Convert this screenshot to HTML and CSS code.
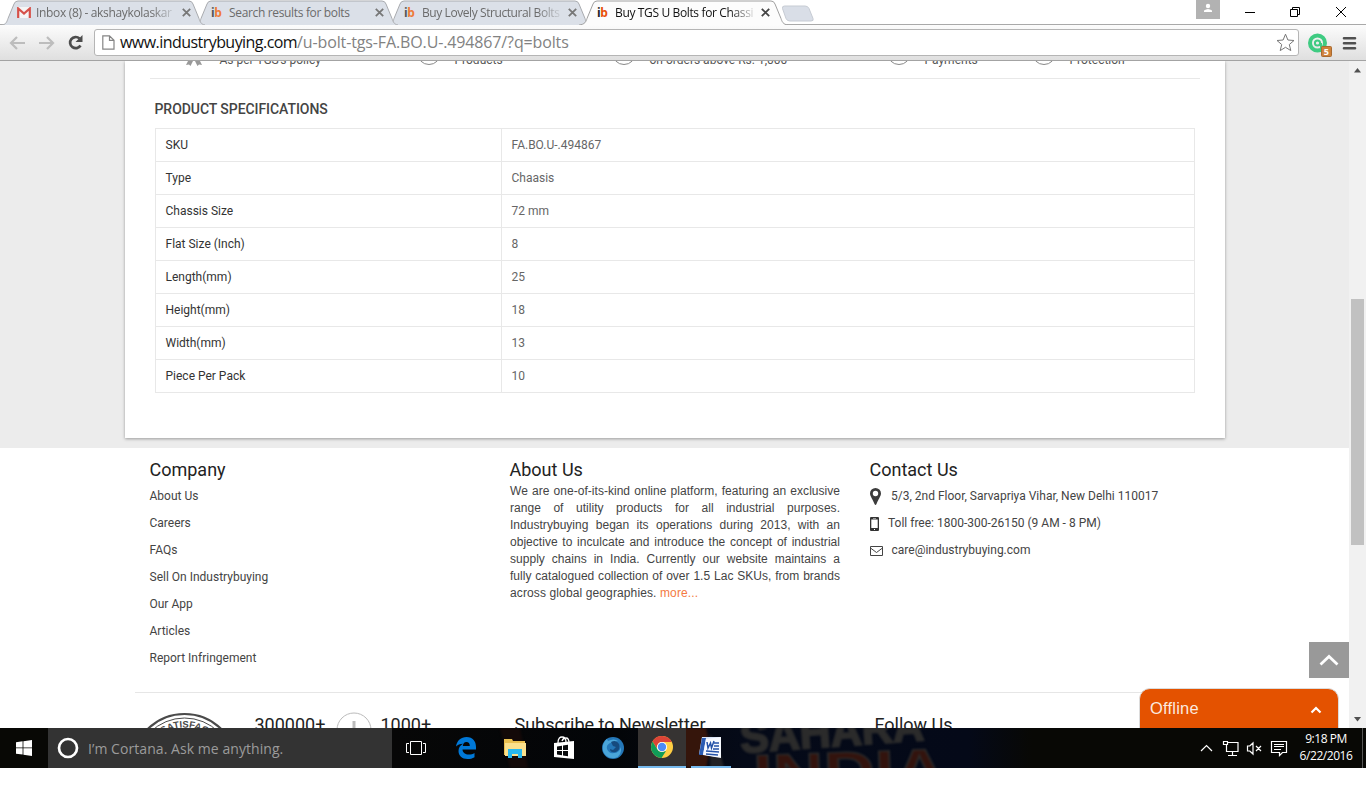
FILE: index.html
```html
<!DOCTYPE html>
<html lang="en">
<head>
<meta charset="utf-8">
<title>Buy TGS U Bolts for Chassis</title>
<link rel="stylesheet" href="styles.css">
</head>
<body>
<div class="tabstrip">
  <svg class="tab-shapes" width="830" height="24" viewBox="0 0 830 24">
    <g fill="#dbe0e8" stroke="#a9abaf">
      <path id="tab" d="M388 24.500C392 24 393 21 394 18L400 3.500Q401 .500 404 .500H575Q578 .500 579 3.500L585 18C586 21 587 24 591 24.500"/>
      <use href="#tab" x="-193"/>
      <use href="#tab" x="-386"/>
    </g>
    <path fill="#fcfcfc" stroke="#a0a0a0" d="M579 24.500C585 24 586 21 587 18L593 3.500Q594 .500 597 .500H771Q774 .500 775 3.500L781 18C782 21 783 24 788 24.500"/>
    <path fill="#d9dee7" stroke="#c6cbd3" d="M784.500 5.500H805Q808 5.500 809 8L813 18Q814 20.500 811 20.500H790Q787 20.500 786 18L782.500 8Q782 5.500 784.500 5.500Z"/>
  </svg>
  <div class="tab">
    <svg class="favicon" width="14" height="11" viewBox="0 0 14 11"><path fill="#f5f5f5" d="M1 0h12v11H1z"/><path fill="none" stroke="#d6514a" stroke-width="2.200" d="M1.200 11V1.500L7 6.500l5.800-5V11"/></svg>
    <span class="tab-title t1">Inbox (8) - akshaykolaskar</span>
    <svg class="close" width="9" height="9" viewBox="0 0 9 9"><path d="M.8.800l7.400 7.400M8.200.800L.8 8.200"/></svg>
  </div>
  <div class="tab">
    <span class="ib"><i>i</i>b</span>
    <span class="tab-title t2">Search results for bolts</span>
    <svg class="close" width="9" height="9" viewBox="0 0 9 9"><path d="M.8.800l7.400 7.400M8.200.800L.8 8.200"/></svg>
  </div>
  <div class="tab">
    <span class="ib"><i>i</i>b</span>
    <span class="tab-title t3">Buy Lovely Structural Bolts</span>
    <svg class="close" width="9" height="9" viewBox="0 0 9 9"><path d="M.8.800l7.400 7.400M8.200.800L.8 8.200"/></svg>
  </div>
  <div class="tab active">
    <span class="ib"><i>i</i>b</span>
    <span class="tab-title t4">Buy TGS U Bolts for Chassi</span>
    <svg class="close" width="9" height="9" viewBox="0 0 9 9"><path d="M.8.800l7.400 7.400M8.200.800L.8 8.200"/></svg>
  </div>
  <svg class="window-controls" width="170" height="24" viewBox="0 0 170 24">
    <path fill="#b2b2b2" d="M0 0h24v19H0z"/><circle cx="12" cy="6" r="2.200" fill="#fff"/><path fill="#fff" d="M8 12V10.500Q12 7.500 16 10.500V12z"/>
    <g fill="none" stroke="#000"><path d="M49 12.500h10M94.500 9.500h7v7h-7zM96.500 9.500v-2h7v7h-2M140 7l10 10M150 7l-10 10"/></g>
  </svg>
</div>
<div class="toolbar">
  <svg class="nav-icons" width="94" height="36" viewBox="0 0 94 36">
    <path fill="none" stroke="#bdbdbd" stroke-width="2.200" d="M25 18H11.500M17 12l-6 6 6 6M39 18h13.500M47 12l6 6-6 6"/>
    <path fill="none" stroke="#4d4d4d" stroke-width="2.700" d="M79.500 13.500A5.600 5.600 0 1 0 80.500 20.500"/><path fill="#4d4d4d" d="M82.500 10v7h-7z"/>
  </svg>
  <div class="omnibox">
    <svg width="13" height="15" viewBox="0 0 13 15"><path fill="#fff" stroke="#858585" stroke-width="1.200" d="M.8.800H7.500L12 5.300V14.200H.8zM7.500.800V5.300H12"/></svg>
    <span class="url"><span class="host">www.industrybuying.com</span><span class="path">/u-bolt-tgs-FA.BO.U-.494867/?q=bolts</span></span>
    <svg class="star" width="19" height="19" viewBox="0 0 19 19"><path fill="none" stroke="#777" d="M9.500 1.200l2.400 5.800 6.100.5-4.700 4 1.500 6.100-5.300-3.300-5.300 3.300 1.500-6.100-4.700-4 6.100-.5z"/></svg>
  </div>
  <svg class="ext" width="62" height="36" viewBox="0 0 62 36">
    <circle cx="14.500" cy="18" r="7.500" fill="none" stroke="#3fcb82" stroke-width="4"/><circle cx="14.500" cy="18" r="2.600" fill="none" stroke="#3fcb82" stroke-width="2"/>
    <path stroke="#3fcb82" stroke-width="2" d="M18 18v6"/>
    <rect x="18.500" y="21.500" width="10" height="10" rx="1" fill="#cf8139" stroke="#a86a30"/><text x="20.800" y="30" class="badge-num">5</text>
    <path stroke="#505050" stroke-width="2.600" stroke-linecap="round" d="M41 13.300h11M41 18.300h11M41 23.300h11"/>
  </svg>
</div>
<div class="viewport">
  <div class="page">
    <div class="upper">
      <div class="card">
        <div class="features">
          <svg width="18" height="24" viewBox="0 0 18 24"><circle cx="9" cy="12" r="7" fill="#999"/><path fill="#999" d="M4 17l-3 6 3-.5 1.500 1.500L8 19zM14 17l3 6-3-.5-1.500 1.500L10 19z"/></svg><span>As per TGS's policy</span>
          <b class="ring"></b><span>Products</span>
          <b class="ring"></b><span>on orders above Rs. 1,000</span>
          <b class="ring"></b><span>Payments</span>
          <b class="ring"></b><span>Protection</span>
        </div>
        <h2>PRODUCT SPECIFICATIONS</h2>
        <table class="specs">
          <tr><th>SKU</th><td>FA.BO.U-.494867</td></tr>
          <tr><th>Type</th><td>Chaasis</td></tr>
          <tr><th>Chassis Size</th><td>72 mm</td></tr>
          <tr><th>Flat Size (Inch)</th><td>8</td></tr>
          <tr><th>Length(mm)</th><td>25</td></tr>
          <tr><th>Height(mm)</th><td>18</td></tr>
          <tr><th>Width(mm)</th><td>13</td></tr>
          <tr><th>Piece Per Pack</th><td>10</td></tr>
        </table>
      </div>
    </div>
    <div class="footer">
      <div class="col">
        <h3>Company</h3>
        <ul>
          <li>About Us</li><li>Careers</li><li>FAQs</li><li>Sell On Industrybuying</li><li>Our App</li><li>Articles</li><li>Report Infringement</li>
        </ul>
      </div>
      <div class="col">
        <h3>About Us</h3>
        <p class="about">We are one-of-its-kind online platform, featuring an exclusive<br>range of utility products for all industrial purposes.<br>Industrybuying began its operations during 2013, with an<br>objective to inculcate and introduce the concept of industrial<br>supply chains in India. Currently our website maintains a<br>fully catalogued collection of over 1.5 Lac SKUs, from brands</p>
        <p class="about last">across global geographies. <a>more...</a></p>
      </div>
      <div class="col">
        <h3>Contact Us</h3>
        <ul class="contact">
          <li><svg width="11" height="17" viewBox="0 0 11 17"><path fill="#3c3c3c" fill-rule="evenodd" d="M5.500 0A5.500 5.500 0 0 1 11 5.500C11 8 8 12 6.500 16Q5.500 18 4.500 16C3 12 0 8 0 5.500A5.500 5.500 0 0 1 5.500 0zm0 2.800a2.700 2.700 0 1 0 0 5.400 2.700 2.700 0 0 0 0-5.400z"/></svg><span>5/3, 2nd Floor, Sarvapriya Vihar, New Delhi 110017</span></li>
          <li class="phone"><svg width="9" height="14" viewBox="0 0 9 14"><path fill="#333" fill-rule="evenodd" d="M1 0h7q1 0 1 1v12q0 1-1 1H1q-1 0-1-1V1q0-1 1-1zm.3 2.500v8.500h6.400V2.500zM3 1v.6h3V1zM4 12v1h1v-1z"/></svg><span>Toll free: 1800-300-26150 (9 AM - 8 PM)</span></li>
          <li class="mail"><svg width="13" height="10" viewBox="0 0 13 10"><path fill="none" stroke="#444" d="M.5.500h12v9H.5zM.5 2l6 4.500 6-4.500"/></svg><span>care@industrybuying.com</span></li>
        </ul>
      </div>
    </div>
    <div class="bottom">
      <svg class="seal" width="80" height="36" viewBox="0 0 80 36">
        <g fill="none" stroke="#4a4a4a"><circle cx="39.500" cy="54.500" r="52.500" stroke-width="2.200"/><circle cx="39.500" cy="54.500" r="48.500"/></g>
        <path id="arc" fill="none" d="M.5 54.500a39 39 0 0 1 78 0"/><text class="seal-text"><textPath href="#arc" startOffset="38">SATISFACTION</textPath></text>
      </svg>
      <span class="count">300000+</span>
      <svg class="dial" width="36" height="36" viewBox="0 0 36 36"><circle cx="18" cy="18" r="17" fill="none" stroke="#bbb"/><path stroke="#bbb" stroke-width="3" d="M18 9v18"/></svg>
      <span class="count">1000+</span>
      <span class="news">Subscribe to Newsletter</span>
      <span class="follow">Follow Us</span>
    </div>
    <svg class="to-top" width="40" height="36" viewBox="0 0 40 36"><path fill="#999" d="M0 0h40v36H0z"/><path fill="none" stroke="#fff" stroke-width="2.800" d="M11.500 22.500L20 14.500l8.500 8"/></svg>
    <div class="chat"><span>Offline</span><svg width="12" height="8" viewBox="0 0 12 8"><path fill="none" stroke="#fff" stroke-width="2.200" d="M1.500 6.500L6 2l4.500 4.500"/></svg></div>
  </div>
  <div class="scrollbar">
    <svg width="17" height="18" viewBox="0 0 17 18"><path fill="#505050" d="M5 11.500L8.500 7l3.500 4.500z"/></svg>
    <i class="thumb"></i>
    <svg width="17" height="17" viewBox="0 0 17 17"><path fill="#505050" d="M5 6l3.500 4.500L12 6z"/></svg>
  </div>
</div>
<div class="taskbar">
  <svg class="wallpaper" width="640" height="40" viewBox="0 0 640 40">
    <defs><linearGradient id="navy"><stop offset="0" stop-color="#070707"/><stop offset=".35" stop-color="#030508"/><stop offset=".55" stop-color="#050a18"/><stop offset=".9" stop-color="#040918"/><stop offset="1" stop-color="#080805"/></linearGradient></defs>
    <path fill="url(#navy)" d="M0 0h640v40H0z"/>
    <g class="jersey"><path fill="#130908" d="M108 0h20l8 40h-18z"/><path fill="#35150b" d="M288 0h26q6 20 0 40h-20z"/><path fill="#222226" d="M318 6q10 12 14 34h-14z"/>
    <text x="349" y="25" class="shirt-top" textLength="184" lengthAdjust="spacingAndGlyphs" transform="rotate(-4 349 25)">SAHARA</text>
    <text x="362" y="66" class="shirt-low" textLength="192" lengthAdjust="spacingAndGlyphs" transform="rotate(-2 362 66)">INDIA</text></g>
  </svg>
  <div class="start"><svg width="16" height="16" viewBox="0 0 16 16"><path fill="#fff" d="M0 2.200l6.600-.9v6.200H0zM7.400 1.200L16 0v7.500H7.400zM0 8.300h6.600v6.300L0 13.700zM7.400 8.300H16V16l-8.600-1.200z"/></svg></div>
  <div class="cortana"><svg width="22" height="22" viewBox="0 0 22 22"><circle cx="11" cy="11" r="9" fill="none" stroke="#fff" stroke-width="2.700"/></svg><span>I’m Cortana. Ask me anything.</span></div>
  <div class="apps">
    <div class="app"><svg width="20" height="14" viewBox="0 0 20 14"><path fill="none" stroke="#fff" d="M4.500.500h11v13h-11zM3 2.500H.5v9H3M17 2.500h2.500v9H17"/></svg></div>
    <div class="app edge"><svg width="20" height="22" viewBox="0 0 20 22"><path fill="#0078d7" d="M0 9.500C1 3.500 5 0 10.500 0 17 0 20 4.500 20 10v2.500H6.500c.2 3.500 3 5 6 5 2.500 0 4.500-.6 6-1.600v4.300C16.500 21.500 14 22 11.500 22 6 22 2.500 18.700 2.500 14c0-3 1.500-5.700 4.500-7.300-3 .2-5.600 1.200-7 2.800zM6.800 9h7c0-2.500-1.200-4-3.400-4S7.200 6.500 6.800 9z"/></svg></div>
    <div class="app edge"><svg width="22" height="19" viewBox="0 0 22 19"><path fill="#e9bf4f" d="M0 0h8l1 2h12v14H0z"/><path fill="#fae08c" d="M1 4h21v13H1z"/><path fill="#27b8ee" d="M4 10h14v9h-4v-4H8v4H4z"/></svg></div>
    <div class="app edge"><svg width="22" height="24" viewBox="0 0 22 24"><path fill="none" stroke="#fff" stroke-width="1.300" d="M5 7C5 2 7 1 9 1s4 1 4 5M9 5q1-3 4-3 3 0 3 5"/><path fill="#fff" d="M1 7l20-2v18L1 21z"/><path fill="#080a0c" d="M4 10.500l5-.8V14H4zM10 9.500l5-.8V14h-5zM4 15h5v4.300L4 18.500zM10 15h5v5.300l-5-.8z"/></svg></div>
    <div class="app edge"><svg width="22" height="22" viewBox="0 0 22 22"><circle cx="11" cy="11" r="11" fill="#2477b8"/><path fill="#4aa5d9" d="M1 8Q3 3 5 2l1 2q6-3 10 0l-4 1-4 1q-4 2-3 6 2 5 7 4 5 0 7-6 1 9-6 11-9 1-12-7z"/><path fill="#164a7e" d="M9 5q5-3 8 2 2 5-3 8-6 1-6-3l3 1 3-3-3-1z"/></svg></div>
    <div class="app open hot"><svg width="22" height="22" viewBox="0 0 22 22"><circle cx="11" cy="11" r="11" fill="#ffce43"/><path fill="#dc4437" d="M1.500 5.500A11 11 0 0 1 20.700 6H11a5 5 0 0 0-4.600 7z"/><path fill="#109c58" d="M1.500 5.500l5 8Q8 16 11 16l4-1-4.500 7A11 11 0 0 1 1.500 5.500z"/><circle cx="11" cy="11" r="5.100" fill="#fff"/><circle cx="11" cy="11" r="4.200" fill="#4c8bf5"/></svg></div>
    <div class="app open word"><svg width="23" height="23" viewBox="0 0 23 23"><path fill="#d9e4f7" d="M3 1h19v16l-4 4L0 18z"/><path fill="#2b5cb3" d="M3 2h4L4 19H0z"/><path fill="#f7faff" d="M7 3l15-2v21L4 19z"/><path fill="none" stroke="#2452a8" stroke-width="1.500" d="M8 6l1 6 2.500-5 1 5L15 5M15 7h5M15 10h5M14 13h6M7 15l13 1M7 18l12 1"/></svg></div>
  </div>
  <svg class="tray" width="90" height="40" viewBox="0 0 90 40">
    <g fill="none" stroke="#fff" stroke-width="1.200"><path d="M1 23l5.500-5.500L12 23"/><path d="M28 14.500h10v9H26.500V17M23.500 13.500h4v3h-4zM32.500 24v3M28 27.500h9"/><path d="M47.500 18h2.300l3.200-3v11l-3.200-3h-2.300zM56 18l5 5M61 18l-5 5"/><path d="M71.500 13.500h15v11h-4l-3 3v-3h-8zM74 16.500h10M74 18.500h10M74 21.500h7"/></g>
  </svg>
  <div class="clock"><span>9:18 PM</span><span class="date">6/22/2016</span></div>
  <i class="peek"></i>
</div>
</body>
</html>
```
FILE: styles.css
```css
* { box-sizing: border-box; }
body { margin: 0; background: #fff; font-family: Roboto, sans-serif; height: 802px; overflow: hidden; display: flex; flex-direction: column; }
svg { display: block; flex: none; }
i { font-style: normal; }

.tabstrip { position: relative; height: 25px; flex: none; display: flex; padding-left: 17px; font: 12px "Open Sans", sans-serif; border-bottom: 1px solid #a9a9a9; }
.tab-shapes { position: absolute; left: 0; top: 0; height: 25px; }
.tab { position: relative; width: 193px; height: 25px; display: flex; align-items: center; color: #6b6b6b; }
.favicon { margin-right: 5px; }
.ib { width: 19px; flex: none; font: bold 12px "Open Sans", sans-serif; letter-spacing: -.4px; color: #ee7a37; padding-left: 1px; }
.ib i { color: #555; }
.tab-title { width: 138px; flex: none; overflow: hidden; white-space: nowrap; mask-image: linear-gradient(90deg, #000 115px, transparent 142px); letter-spacing: -.42px; }
.t2 { mask-image: none; letter-spacing: -.34px; }
.t1 { letter-spacing: -.33px; }
.t4 { letter-spacing: -.36px; }
.close { margin-left: 8px; stroke: #777; stroke-width: 1.8; }
.active { color: #111; }
.active .ib { color: #e8500a; }
.active .ib i { color: #222; }
.active .close { stroke: #444; }
.tabstrip .window-controls { position: relative; width: 170px; margin-left: auto; }

.toolbar { height: 36px; flex: none; display: flex; align-items: center; background: linear-gradient(#fcfcfc, #dfdfdf); border-bottom: 1px solid #a3a3a3; }
.omnibox { width: 1205px; height: 27px; border: 1px solid #b5b5b5; border-radius: 3px; background: #fff; display: flex; align-items: center; padding: 0 3px 0 7px; margin-top: -1px; }
.url { margin-left: 5px; font: 16px "Open Sans", sans-serif; white-space: nowrap; }
.host { color: #111; letter-spacing: -.55px; }
.path { color: #828282; letter-spacing: -.13px; }
.star { margin-left: auto; }
.ext { margin-left: 4px; }
.badge-num { font: bold 9px "Open Sans", sans-serif; fill: #fff; }

.viewport { height: 667px; flex: none; display: flex; }
.page { position: relative; width: 1349px; height: 667px; overflow: hidden; }
.upper { height: 387px; background: #ececec; overflow: hidden; }
.card { width: 1100px; height: 377px; margin-left: 125px; background: #fff; box-shadow: 0 1px 3px rgba(0,0,0,.35); padding: 0 30px 0 25px; overflow: hidden; }
.features { width: 1050px; height: 33px; margin-top: -15px; padding-left: 35px; display: grid; grid-template-columns: 34px 199px 36px 159px 36px 239px 36px 109px 36px 1fr; align-items: start; border-bottom: 1px solid #e8e8e8; font-size: 12px; color: #555; line-height: 14px; white-space: nowrap; }
.features > svg { margin-top: -4px; }
.features span { margin-top: 7px; padding-left: .5px; }
.ring { width: 24px; height: 24px; border: 1px solid #888; border-radius: 50%; margin-top: -5px; margin-left: -1px; }
.card h2 { margin: 21px 0 10px 4.5px; font-size: 14px; line-height: 18px; font-weight: 500; color: #444; letter-spacing: -.06px; }
.specs { margin-left: 5px; width: 1040px; border-collapse: collapse; font-size: 12px; }
.specs th, .specs td { height: 33px; padding: 0 10px 0 9.5px; border: 1px solid #e8e8e8; text-align: left; font-weight: 400; line-height: 16px; }
.specs th { width: 346px; color: #333; }
.specs td { color: #666; }

.footer { height: 245px; margin-left: 135px; width: 1080px; border-bottom: 1px solid #e6e6e6; padding: 11px 0 0 14.5px; display: flex; }
.col { width: 360px; flex: none; color: #444; font-size: 12px; }
.col h3 { margin: 0; font-size: 18px; line-height: 22px; font-weight: 400; color: #222; }
.col ul { list-style: none; margin: 1px 0 0; padding: 0; }
.col li { height: 27px; line-height: 26px; display: flex; align-items: center; }
.contact svg { margin-top: 2px; }
.contact span { margin-left: 10.5px; }
.contact .phone span { margin-left: 9.5px; }
.contact .mail span { margin-left: 9px; }
.about { margin: 2px 0 0 .5px; width: 330px; font: 12px/17px "Liberation Sans", sans-serif; text-align: justify; text-align-last: justify; letter-spacing: .03px; }
.about.last { margin-top: 0; text-align-last: left; letter-spacing: .12px; }
.about a { color: #f47a42; }

.bottom { height: 36px; display: flex; padding-left: 145px; padding-top: 19px; font-size: 18px; line-height: 22px; color: #222; white-space: nowrap; }
.bottom span { margin-top: 2px; }
.seal-text { font: bold 9.5px "Liberation Sans", sans-serif; fill: #4a4a4a; }
.count { width: 81px; margin-left: 29.5px; }
.dial + .count { margin-left: 9px; width: 134px; }
.news { width: 360px; }
.to-top { position: absolute; right: 0; top: 581px; }
.chat { position: absolute; left: 1139px; top: 627px; width: 200px; height: 50px; border: 1px solid #dcdcdc; border-radius: 11px 11px 0 0; background: #e45200; color: #fbe9df; font: 16.5px "Liberation Sans", sans-serif; letter-spacing: .2px; display: flex; justify-content: space-between; padding: 10px 16px 0 10px; }
.chat svg { margin-top: 7px; }
.scrollbar { width: 17px; height: 667px; background: #f1f1f1; display: flex; flex-direction: column; position: relative; }
.thumb { width: 13px; height: 246px; background: #c1c1c1; margin: 220px 0 auto 2px; }

.taskbar { position: relative; height: 40px; flex: none; background: #080805; display: flex; overflow: hidden; }
.wallpaper { position: absolute; left: 392px; top: 0; }
.jersey { filter: blur(1px); font-family: "Liberation Sans", sans-serif; font-weight: bold; }
.shirt-top { font-size: 44px; fill: #2b2b2b; stroke: #2b2b2b; stroke-width: 2px; }
.shirt-low { font-size: 56px; fill: #33130d; stroke: #2c2c2c; stroke-width: 1.5px; }
.start { width: 48px; display: flex; align-items: center; justify-content: center; position: relative; }
.cortana { width: 344px; background: #333; display: flex; align-items: center; padding-left: 9px; color: #9b9b9b; font: 14px "Open Sans", sans-serif; letter-spacing: .06px; position: relative; }
.cortana span { margin-left: 9px; white-space: nowrap; }
.apps { display: flex; position: relative; }
.app { width: 49px; height: 40px; display: flex; align-items: center; justify-content: center; padding-right: 1px; }
.app.edge { padding-right: 0; }
.app.open { border-bottom: 2px solid #76b9ed; width: 48px; }
.app.hot { background: #363332; margin-left: 1px; }
.app.word { width: 40px; margin-left: 5px; }
.tray { position: relative; margin-left: auto; }
.clock { position: relative; width: 72px; color: #fff; font: 12px/17px "Open Sans", sans-serif; display: flex; flex-direction: column; align-items: center; padding-top: 2px; letter-spacing: -.45px; }
.peek { width: 4px; border-left: 1px solid #555; position: relative; }
```
